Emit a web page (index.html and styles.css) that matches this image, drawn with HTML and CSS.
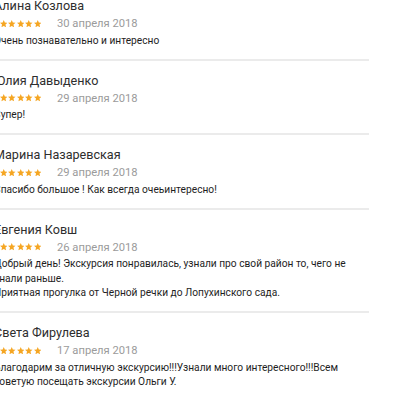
FILE: index.html
```html
<!DOCTYPE html>
<html lang="ru">
<head>
<meta charset="utf-8">
<link rel="stylesheet" href="styles.css">
</head>
<body>
<div class="reviews">
  <div class="review">
    <div class="name">Алина Козлова</div>
    <div class="meta"><span class="stars"><svg viewBox="2 2 20 20"><path d="M12 2l2.9 6.9 7.1.6-5.4 4.7 1.6 7.3L12 17.8 5.8 21.5l1.6-7.3L2 9.5l7.1-.6z"/></svg><svg viewBox="2 2 20 20"><path d="M12 2l2.9 6.9 7.1.6-5.4 4.7 1.6 7.3L12 17.8 5.8 21.5l1.6-7.3L2 9.5l7.1-.6z"/></svg><svg viewBox="2 2 20 20"><path d="M12 2l2.9 6.9 7.1.6-5.4 4.7 1.6 7.3L12 17.8 5.8 21.5l1.6-7.3L2 9.5l7.1-.6z"/></svg><svg viewBox="2 2 20 20"><path d="M12 2l2.9 6.9 7.1.6-5.4 4.7 1.6 7.3L12 17.8 5.8 21.5l1.6-7.3L2 9.5l7.1-.6z"/></svg><svg viewBox="2 2 20 20"><path d="M12 2l2.9 6.9 7.1.6-5.4 4.7 1.6 7.3L12 17.8 5.8 21.5l1.6-7.3L2 9.5l7.1-.6z"/></svg></span><span class="date">30 апреля 2018</span></div>
    <div class="text">Очень познавательно и интересно</div>
  </div>
  <div class="review">
    <div class="name">Юлия Давыденко</div>
    <div class="meta"><span class="stars"><svg viewBox="2 2 20 20"><path d="M12 2l2.9 6.9 7.1.6-5.4 4.7 1.6 7.3L12 17.8 5.8 21.5l1.6-7.3L2 9.5l7.1-.6z"/></svg><svg viewBox="2 2 20 20"><path d="M12 2l2.9 6.9 7.1.6-5.4 4.7 1.6 7.3L12 17.8 5.8 21.5l1.6-7.3L2 9.5l7.1-.6z"/></svg><svg viewBox="2 2 20 20"><path d="M12 2l2.9 6.9 7.1.6-5.4 4.7 1.6 7.3L12 17.8 5.8 21.5l1.6-7.3L2 9.5l7.1-.6z"/></svg><svg viewBox="2 2 20 20"><path d="M12 2l2.9 6.9 7.1.6-5.4 4.7 1.6 7.3L12 17.8 5.8 21.5l1.6-7.3L2 9.5l7.1-.6z"/></svg><svg viewBox="2 2 20 20"><path d="M12 2l2.9 6.9 7.1.6-5.4 4.7 1.6 7.3L12 17.8 5.8 21.5l1.6-7.3L2 9.5l7.1-.6z"/></svg></span><span class="date">29 апреля 2018</span></div>
    <div class="text">Супер!</div>
  </div>
  <div class="review">
    <div class="name">Марина Назаревская</div>
    <div class="meta"><span class="stars"><svg viewBox="2 2 20 20"><path d="M12 2l2.9 6.9 7.1.6-5.4 4.7 1.6 7.3L12 17.8 5.8 21.5l1.6-7.3L2 9.5l7.1-.6z"/></svg><svg viewBox="2 2 20 20"><path d="M12 2l2.9 6.9 7.1.6-5.4 4.7 1.6 7.3L12 17.8 5.8 21.5l1.6-7.3L2 9.5l7.1-.6z"/></svg><svg viewBox="2 2 20 20"><path d="M12 2l2.9 6.9 7.1.6-5.4 4.7 1.6 7.3L12 17.8 5.8 21.5l1.6-7.3L2 9.5l7.1-.6z"/></svg><svg viewBox="2 2 20 20"><path d="M12 2l2.9 6.9 7.1.6-5.4 4.7 1.6 7.3L12 17.8 5.8 21.5l1.6-7.3L2 9.5l7.1-.6z"/></svg><svg viewBox="2 2 20 20"><path d="M12 2l2.9 6.9 7.1.6-5.4 4.7 1.6 7.3L12 17.8 5.8 21.5l1.6-7.3L2 9.5l7.1-.6z"/></svg></span><span class="date">29 апреля 2018</span></div>
    <div class="text">Спасибо большое ! Как всегда очеьинтересно!</div>
  </div>
  <div class="review">
    <div class="name">Евгения Ковш</div>
    <div class="meta"><span class="stars"><svg viewBox="2 2 20 20"><path d="M12 2l2.9 6.9 7.1.6-5.4 4.7 1.6 7.3L12 17.8 5.8 21.5l1.6-7.3L2 9.5l7.1-.6z"/></svg><svg viewBox="2 2 20 20"><path d="M12 2l2.9 6.9 7.1.6-5.4 4.7 1.6 7.3L12 17.8 5.8 21.5l1.6-7.3L2 9.5l7.1-.6z"/></svg><svg viewBox="2 2 20 20"><path d="M12 2l2.9 6.9 7.1.6-5.4 4.7 1.6 7.3L12 17.8 5.8 21.5l1.6-7.3L2 9.5l7.1-.6z"/></svg><svg viewBox="2 2 20 20"><path d="M12 2l2.9 6.9 7.1.6-5.4 4.7 1.6 7.3L12 17.8 5.8 21.5l1.6-7.3L2 9.5l7.1-.6z"/></svg><svg viewBox="2 2 20 20"><path d="M12 2l2.9 6.9 7.1.6-5.4 4.7 1.6 7.3L12 17.8 5.8 21.5l1.6-7.3L2 9.5l7.1-.6z"/></svg></span><span class="date">26 апреля 2018</span></div>
    <div class="text">Добрый день! Экскурсия понравилась, узнали про свой район то, чего не знали раньше.<br>Приятная прогулка от Черной речки до Лопухинского сада.</div>
  </div>
  <div class="review">
    <div class="name">Света Фирулева</div>
    <div class="meta"><span class="stars"><svg viewBox="2 2 20 20"><path d="M12 2l2.9 6.9 7.1.6-5.4 4.7 1.6 7.3L12 17.8 5.8 21.5l1.6-7.3L2 9.5l7.1-.6z"/></svg><svg viewBox="2 2 20 20"><path d="M12 2l2.9 6.9 7.1.6-5.4 4.7 1.6 7.3L12 17.8 5.8 21.5l1.6-7.3L2 9.5l7.1-.6z"/></svg><svg viewBox="2 2 20 20"><path d="M12 2l2.9 6.9 7.1.6-5.4 4.7 1.6 7.3L12 17.8 5.8 21.5l1.6-7.3L2 9.5l7.1-.6z"/></svg><svg viewBox="2 2 20 20"><path d="M12 2l2.9 6.9 7.1.6-5.4 4.7 1.6 7.3L12 17.8 5.8 21.5l1.6-7.3L2 9.5l7.1-.6z"/></svg><svg viewBox="2 2 20 20"><path d="M12 2l2.9 6.9 7.1.6-5.4 4.7 1.6 7.3L12 17.8 5.8 21.5l1.6-7.3L2 9.5l7.1-.6z"/></svg></span><span class="date">17 апреля 2018</span></div>
    <div class="text">Благодарим за отличную экскурсию!!!Узнали много интересного!!!Всем советую посещать экскурсии Ольги У.</div>
  </div>
</div>
</body>
</html>
```

FILE: styles.css
```css
html, body {
  margin: 0;
  padding: 0;
  background: #ffffff;
  overflow: hidden;
}

.reviews {
  margin-top: -14px;
  margin-left: -6px;
  width: 375px;
  font-family: Roboto, "Noto Sans", sans-serif;
}

.review {
  padding: 11px 0 10.5px;
  border-bottom: 2px solid #ebebeb;
}

.name {
  font-size: 12.6px;
  line-height: 17px;
  color: #2e2e2e;
}

.meta {
  display: flex;
  align-items: center;
  height: 17px;
  margin-top: 1px;
}

.stars {
  display: flex;
  gap: 1px;
  margin-left: 5.5px;
  width: 57.5px;
}

.stars svg {
  width: 7.5px;
  height: 7.5px;
  fill: #f5a623;
}

.date {
  font-size: 11.2px;
  line-height: 17px;
  color: #9b9b9b;
}

.text {
  font-size: 10.2px;
  line-height: 14.5px;
  margin-top: 1.5px;
  color: #1e1e1e;
}
```
